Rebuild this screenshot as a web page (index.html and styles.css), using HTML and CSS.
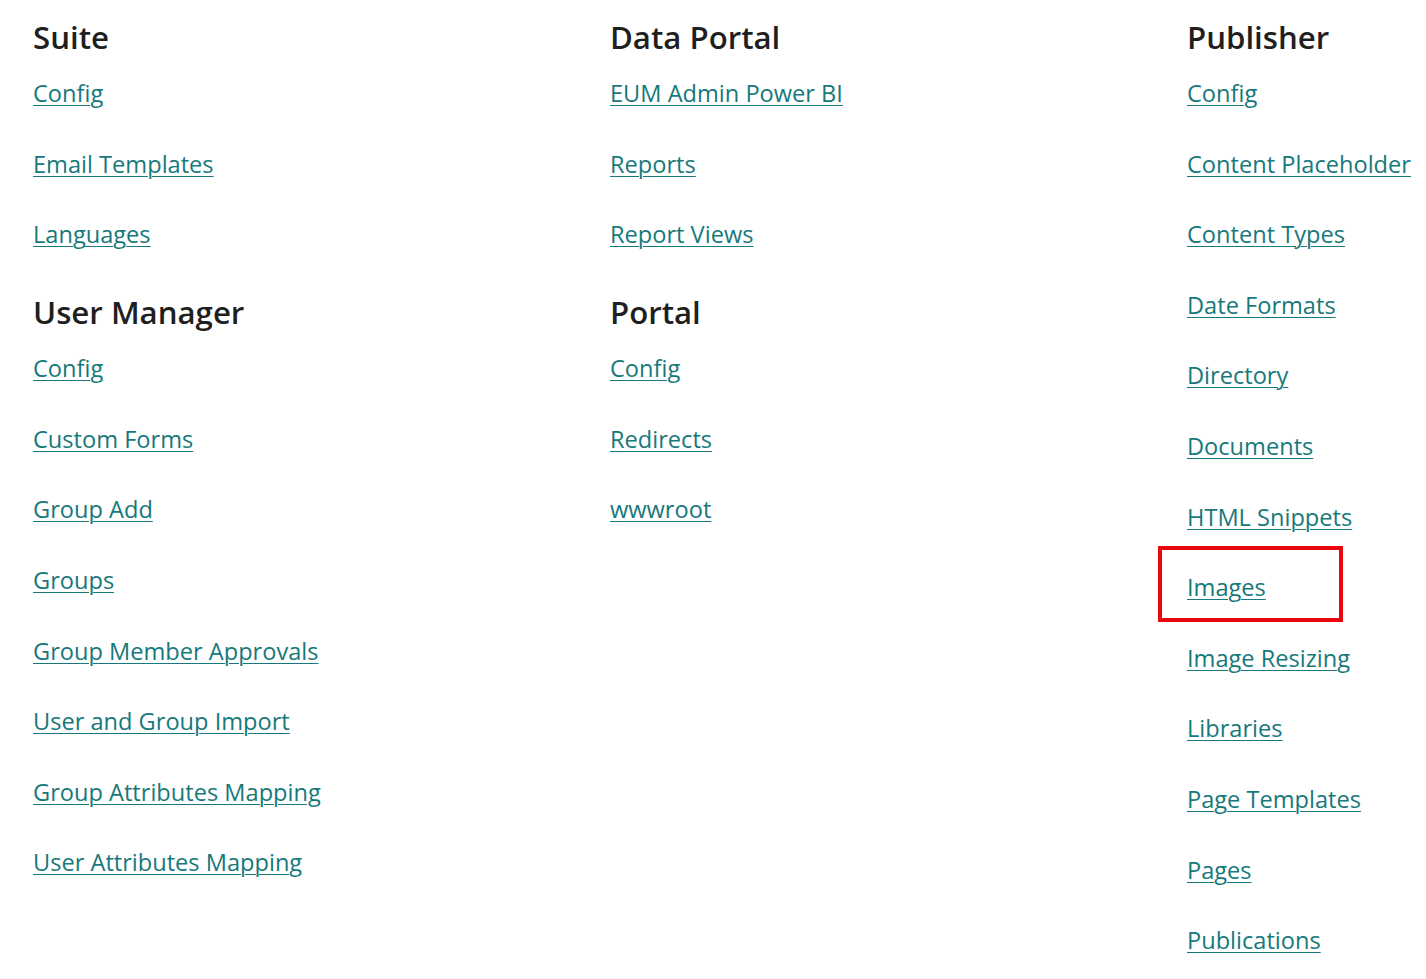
FILE: index.html
```html
<!DOCTYPE html>
<html lang="en">
<head>
<meta charset="utf-8">
<title>Admin</title>
<link rel="stylesheet" href="styles.css">
</head>
<body>
<main class="grid">
  <div class="col">
    <section class="section">
      <h2 class="title">Suite</h2>
      <ul class="links">
        <li><a href="#">Config</a></li>
        <li><a href="#">Email Templates</a></li>
        <li><a href="#">Languages</a></li>
      </ul>
    </section>
    <section class="section">
      <h2 class="title">User Manager</h2>
      <ul class="links">
        <li><a href="#">Config</a></li>
        <li><a href="#">Custom Forms</a></li>
        <li><a href="#">Group Add</a></li>
        <li><a href="#">Groups</a></li>
        <li><a href="#">Group Member Approvals</a></li>
        <li><a href="#">User and Group Import</a></li>
        <li><a href="#">Group Attributes Mapping</a></li>
        <li><a href="#">User Attributes Mapping</a></li>
      </ul>
    </section>
  </div>
  <div class="col">
    <section class="section">
      <h2 class="title">Data Portal</h2>
      <ul class="links">
        <li><a href="#">EUM Admin Power BI</a></li>
        <li><a href="#">Reports</a></li>
        <li><a href="#">Report Views</a></li>
      </ul>
    </section>
    <section class="section">
      <h2 class="title">Portal</h2>
      <ul class="links">
        <li><a href="#">Config</a></li>
        <li><a href="#">Redirects</a></li>
        <li><a href="#">wwwroot</a></li>
      </ul>
    </section>
  </div>
  <div class="col">
    <section class="section">
      <h2 class="title">Publisher</h2>
      <ul class="links">
        <li><a href="#">Config</a></li>
        <li><a href="#">Content Placeholder</a></li>
        <li><a href="#">Content Types</a></li>
        <li><a href="#">Date Formats</a></li>
        <li><a href="#">Directory</a></li>
        <li><a href="#">Documents</a></li>
        <li><a href="#">HTML Snippets</a></li>
        <li class="highlight"><a href="#">Images</a></li>
        <li><a href="#">Image Resizing</a></li>
        <li><a href="#">Libraries</a></li>
        <li><a href="#">Page Templates</a></li>
        <li><a href="#">Pages</a></li>
        <li><a href="#">Publications</a></li>
      </ul>
    </section>
  </div>
</main>
</body>
</html>
```
FILE: styles.css
```css
html, body {
  margin: 0;
  padding: 0;
  background: #ffffff;
}
body {
  font-family: "Open Sans", "Noto Sans", "Liberation Sans", sans-serif;
  overflow: hidden;
}
.grid {
  display: grid;
  grid-template-columns: 577px 577px 1fr;
  padding: 17px 0 0 33px;
}
.col {
  display: flex;
  flex-direction: column;
  gap: 5.5px;
}
.title {
  margin: 0;
  font-size: 31.2px;
  line-height: 40px;
  font-weight: 600;
  color: #1f1f1f;
}
.links {
  list-style: none;
  margin: 18px 0 0 0;
  padding: 0;
}
.links li {
  font-size: 23.6px;
  line-height: 36px;
  padding-bottom: 34.6px;
  position: relative;
}
.links a {
  color: #17797b;
  text-decoration: underline;
  text-underline-offset: 3px;
  text-decoration-thickness: 1px;
}
.highlight::before {
  content: "";
  position: absolute;
  left: -29px;
  top: -23px;
  width: 177px;
  height: 68px;
  border: 4px solid #e8070f;
}
```
